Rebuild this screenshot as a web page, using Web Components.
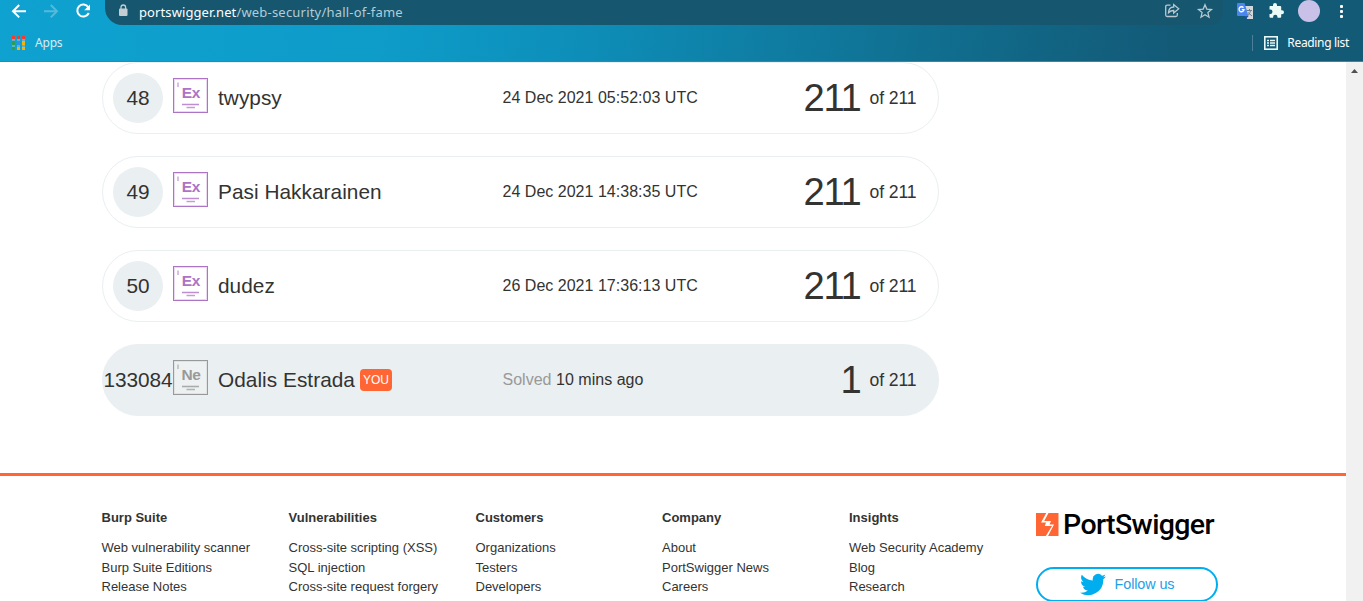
<!DOCTYPE html>
<html lang="en"><head><meta charset="utf-8"><title>Hall of Fame</title>
<style>html,body{margin:0;height:601px;overflow:hidden;background:#fff;font-family:"Liberation Sans",Arial,sans-serif;color:#333332}</style></head>
<body><ps-app></ps-app>
<script>
const define=(name,html)=>customElements.define(name,class extends HTMLElement{
  connectedCallback(){
    if(this.shadowRoot)return;
    const r=this.attachShadow({mode:'open'});
    const t=document.createElement('template');
    t.innerHTML=typeof html==='function'?html(this):html;
    r.append(t.content.cloneNode(true));
  }
});

define('browser-bar',`<style>
:host{display:flex;flex-direction:column;height:62px;box-sizing:border-box;border-bottom:1px solid #4a7f97;background:linear-gradient(97deg,#0ea2d0 0%,#0e9cc9 28%,#0d8fba 42%,#0f7fa5 55%,#116685 75%,#135a77 86%,#135a77 100%);font-family:"Noto Sans","Open Sans",sans-serif;color:#fff}
.top{height:25px;display:flex;align-items:flex-start}
svg{display:block;flex:none}
.nav{width:105px;height:24px}
.url{width:1118px;height:25px;box-sizing:border-box;border-radius:0 0 13px 17px;background:#16566f;display:flex;align-items:flex-start}
.addr{font-size:13px;line-height:24px;color:#b4ccd6;white-space:nowrap;flex:1;letter-spacing:.2px}
.addr b{font-weight:400;color:#fff;letter-spacing:.1px}
.ext{height:25px}
.marks{flex:1;display:flex;align-items:flex-start;padding-left:11px;font-size:12px;line-height:36px}
.apps{margin-top:11px;margin-right:10px}
.sp{flex:1}.sep{width:1px;height:16px;background:#4d8098;margin:10px 11px 0 0}
.rl{margin:11px 9px 0 0}
.lab{color:#dcebf1;letter-spacing:-.2px}
.last{margin-right:14px;letter-spacing:-.33px}
</style>
<div class="top">
<svg class="nav" viewBox="0 0 105 24" fill="none" stroke="#fff" stroke-width="2"><path d="M26 11.200H13.500M19.200 5L13 11.200l6.200 6.200"/><path d="M44 11.200H56.500M50.800 5L57 11.200l-6.200 6.200" stroke="#56b9da"/><path d="M88.300 7.200A6 6 0 1 0 88.800 13"/><path d="M90 4.500V10.300H84.200z" fill="#fff" stroke="none"/></svg>
<div class="url"><svg width="34" height="24" fill="none"><rect x="14" y="8.500" width="8.500" height="7.500" rx="1" fill="#c4cdd1"/><path d="M16 9V7.300a2.300 2.300 0 0 1 4.600 0V9" stroke="#c4cdd1" stroke-width="1.300"/></svg>
<span class="addr"><b>portswigger.net</b>/web-security/hall-of-fame</span>
<svg width="59" height="24" fill="none" stroke="#b9c9cf" stroke-width="1.300"><path d="M6.500 5.200H3.200q-1.500 0-1.500 1.500V15q0 1.500 1.500 1.500h8.600q1.500 0 1.500-1.500V13"/><path d="M4.500 12.700C4.600 9 6.500 7.100 9.700 7V4.600L14.700 8.800 9.700 13V10.500C7.500 10.500 6 11.200 4.500 12.700z"/><path d="M41 4.700l1.800 4.400 4.700.4-3.600 3.100 1.100 4.600-4-2.400-4 2.400 1.100-4.600-3.600-3.100 4.700-.4z"/></svg></div>
<svg class="ext" viewBox="1223 0 140 25" width="140"><path d="M1245 6h8v13h-6z" fill="#d5d8da"/><path d="M1246.500 10.500h5.500M1249.500 9v2M1247 16c2-1 3-3 3.300-5M1248 12.500l4 3.500" stroke="#687e8b" fill="none"/><path d="M1238 3h6.500l4 13H1238q-1 0-1-1V4q0-1 1-1z" fill="#4b86ee"/><path d="M1243.500 7.700a2.500 2.500 0 1 0 .5 2h-2.200" stroke="#fff" stroke-width="1.300" fill="none"/><path d="M1244.700 16h4l-2.500 2.700z" fill="#2452ba"/><path d="M1270 6h3V5a2 2 0 0 1 4 0v1h3.200q1 0 1 1v3.200h.8a2 2 0 0 1 0 4h-.8v2.600q0 1-1 1h-2.700V17a2.200 2.200 0 0 0-4.400 0v.8h-2.600q-1 0-1-1V14h.8a2.200 2.200 0 0 0 0-4.400h-.8V7q0-1 .5-1z" fill="#ebfaf7"/><circle cx="1309" cy="11" r="11" fill="#c9c1e7"/><g fill="#fff"><rect x="1340" y="5" width="3" height="3" rx="1"/><rect x="1340" y="10" width="3" height="3" rx="1"/><rect x="1340" y="15" width="3" height="3" rx="1"/></g></svg></div>
<div class="marks"><svg class="apps" width="14" height="14"><path d="M1 0h3v3H1zM6 0h3v3H6zM11 0h3v3h-3z" fill="#f33b30"/><path d="M1 5h3v4H1zM1 11h3v3H1z" fill="#2c9d56"/><path d="M6 5h3v4H6z" fill="#3c88f0"/><path d="M11 5h3v4h-3zM6 11h3v3H6zM11 11h3v3h-3z" fill="#f9b20a"/><path d="M1 4h3M6 4h3M11 4h3M1 10h3M6 10h3M11 10h3" stroke="#bcd5d9" stroke-width=".8"/></svg><span class="lab">Apps</span><span class="sp"></span><span class="sep"></span><svg class="rl" width="14" height="14" fill="none" stroke="#e6f8f7"><rect x=".8" y=".8" width="12.400" height="12.400" stroke-width="1.600"/><path d="M3 4.500h2M6 4.500h5M3 7h2M6 7h5M3 9.500h2M6 9.500h5" stroke-width="1.400"/></svg><span class="last">Reading list</span></div>`);

define('level-badge',`<style>:host{display:block;width:35px;height:35px;box-sizing:border-box;border:1px solid var(--c);background:var(--bg);box-shadow:inset 0 0 0 1px var(--s);color:var(--c);position:relative;font-weight:700;font-size:15.500px;line-height:17px;text-align:center}
span{display:block;padding:5px 0 0 1px;letter-spacing:-.3px}svg{position:absolute;left:-1px;top:-1px}</style><span><slot></slot></span><svg width="35" height="35" fill="none" stroke="currentColor"><path d="M5 4.500v4.500" stroke-width="1.300" opacity=".7"/><path d="M9 26.500h17" stroke-width="1.500" opacity=".8"/><path d="M13.500 29.500h8.500" stroke-width="1.500" opacity=".7"/></svg>`);

define('rank-row',e=>`<style>
:host{display:grid;grid-template-columns:70px 45px 284.500px 1fr auto;align-items:center;width:837px;height:72px;box-sizing:border-box;border:1px solid #eaeff1;border-radius:36px;padding-right:21.500px;white-space:nowrap;--c:#ad73c5;--s:#ead9f0;--bg:#fff}
:host([you]){background:#eaeff1;--c:#999;--s:#dfe3e4;--bg:#edf1f2}
.n{width:50px;height:50px;border-radius:50%;background:#eaeff1;justify-self:center;font-size:20.800px;line-height:50px;display:flex;justify-content:center;letter-spacing:-.1px}
level-badge{margin-top:-5px;justify-self:start}
.name{font-size:20.800px;display:flex;align-items:center;line-height:24px;letter-spacing:.04px}
.you{background:#ff6633;color:#fff;border-radius:4px;font-size:12px;line-height:23px;height:22px;width:32px;text-align:center;margin-left:5px}
.date{font-size:16px;line-height:20px;letter-spacing:.02px}.date i{font-style:normal;color:#999}
.score{font-size:17.600px;display:flex;align-items:center}.score b{font-size:38.200px;font-weight:400;line-height:44px;letter-spacing:-1.300px;margin-right:9px}.score span{letter-spacing:-.1px}
</style><div class="n">${e.getAttribute('rank')}</div><level-badge>${e.getAttribute('level')}</level-badge><div class="name"><slot></slot>${e.hasAttribute('you')?'<span class="you">YOU</span>':''}</div><div class="date">${e.hasAttribute('solved')?'<i>Solved</i> ':''}${e.getAttribute('date')}</div><div class="score"><b>${e.getAttribute('score')}</b><span>of 211</span></div>`);

define('link-column',e=>`<style>:host{display:block;font-size:13px;white-space:nowrap}h4{margin:0 0 10px;font-size:13px;line-height:20px}div{line-height:19.600px}</style><h4>${e.getAttribute('heading')}</h4>${e.getAttribute('links').split('|').map(x=>`<div>${x}</div>`).join('')}`);

define('ps-brand',`<style>:host{display:block;width:182px;padding-top:5px}
.logo{display:flex;height:32px;align-items:flex-start}svg{display:block;flex:none}.word{font-family:Roboto,"Liberation Sans",sans-serif;font-weight:500;font-size:28.500px;line-height:28px;color:#000;letter-spacing:-.62px;margin:-2px 0 0 4px;white-space:nowrap}
.follow{margin-top:22px;height:35px;box-sizing:border-box;border:2px solid #00aeef;border-radius:18px;display:flex;align-items:center;justify-content:center;color:#21a0e8;font-size:14.400px;gap:9px}
.follow span{margin-top:-2px;letter-spacing:-.1px}</style>
<div class="logo"><svg width="23" height="23"><path fill="#ff6633" d="M0 0h22.500v23H0z"/><path d="M11.300 0L6 9.500H11L9.800 13H17L10.800 23H13L19 11.500H14.500L16 8H9.200L13.500 0z" fill="#fff" transform="translate(-1)"/></svg><span class="word">PortSwigger</span></div>
<div class="follow"><svg width="26" height="23" viewBox="0 2.200 24 19.600"><path fill="#00aeef" d="M24 4.600a10 10 0 0 1-2.800.8 5 5 0 0 0 2.200-2.700c-1 .6-2 1-3.100 1.200a4.900 4.900 0 0 0-8.400 4.500C7.700 8.100 4.100 6.100 1.700 3.100a4.900 4.900 0 0 0 1.500 6.600c-.8 0-1.600-.2-2.200-.6v.1a4.900 4.900 0 0 0 3.900 4.800c-.7.200-1.500.2-2.200.1a4.900 4.900 0 0 0 4.600 3.400A9.900 9.900 0 0 1 0 19.500a13.900 13.900 0 0 0 21.500-12.400A10 10 0 0 0 24 4.600z"/></svg><span>Follow us</span></div>`);

define('ps-footer',`<style>:host{display:grid;grid-template-columns:187px 187px 186.500px 187px 187px 182px;box-sizing:border-box;height:128px;border-top:3px solid #ff6633;padding:32px 0 0 101.500px;overflow:hidden}ps-brand{box-sizing:border-box}</style>
<link-column heading="Burp Suite" links="Web vulnerability scanner|Burp Suite Editions|Release Notes"></link-column>
<link-column heading="Vulnerabilities" links="Cross-site scripting (XSS)|SQL injection|Cross-site request forgery"></link-column>
<link-column heading="Customers" links="Organizations|Testers|Developers"></link-column>
<link-column heading="Company" links="About|PortSwigger News|Careers"></link-column>
<link-column heading="Insights" links="Web Security Academy|Blog|Research"></link-column><ps-brand></ps-brand>`);

define('scroll-track',`<style>:host{display:block;width:17px;background:#f1f1f1}svg{display:block}</style><svg width="17" height="17"><path d="M5 11l3.500-4 3.500 4z" fill="#505050"/></svg>`);

define('ps-app',`<style>:host{display:flex;flex-direction:column;width:1363px;height:601px;overflow:hidden}.body{display:flex;flex:1;min-height:0}.page{width:1346px;display:flex;flex-direction:column}.rows{height:411px;flex:none;display:flex;flex-direction:column;gap:22px;padding-left:102px}ps-footer{flex:none}</style>
<browser-bar></browser-bar><div class="body"><div class="page"><div class="rows">
<rank-row rank="48" level="Ex" date="24 Dec 2021 05:52:03 UTC" score="211">twypsy</rank-row>
<rank-row rank="49" level="Ex" date="24 Dec 2021 14:38:35 UTC" score="211">Pasi Hakkarainen</rank-row>
<rank-row rank="50" level="Ex" date="26 Dec 2021 17:36:13 UTC" score="211">dudez</rank-row>
<rank-row rank="133084" level="Ne" date="10 mins ago" score="1" you solved>Odalis Estrada</rank-row>
</div><ps-footer></ps-footer></div><scroll-track></scroll-track></div>`);
</script></body></html>
